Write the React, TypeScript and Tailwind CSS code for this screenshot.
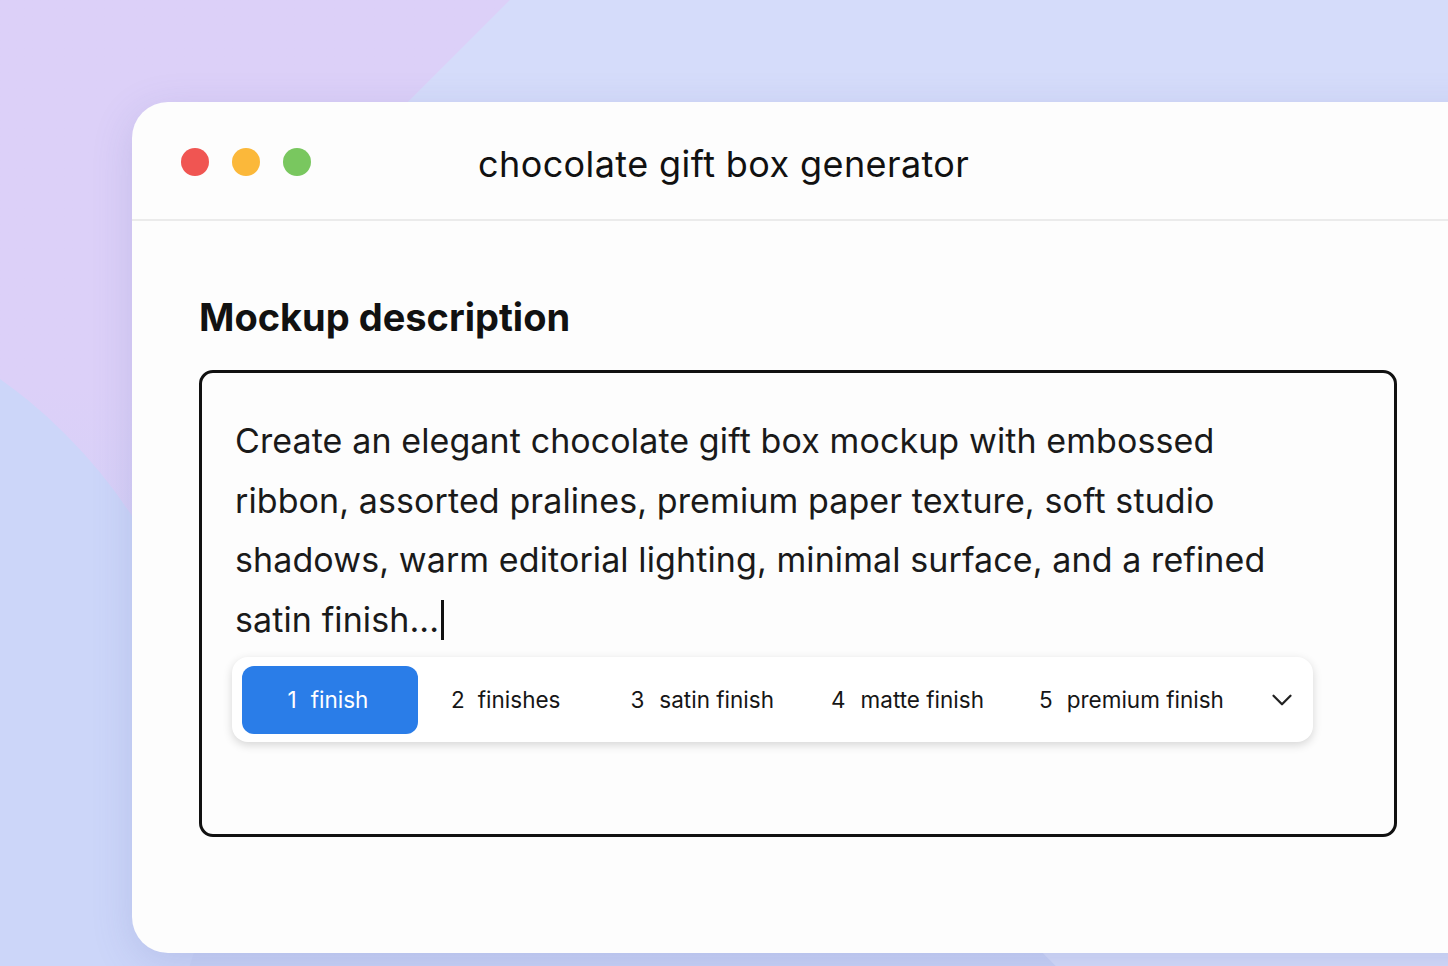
import React from "react";
import { ChevronDown } from "lucide-react";

const font = { fontFamily: "Inter, Roboto, 'Noto Sans', Arial, sans-serif" };

export default function App() {
  return (
    <div
      className="relative w-[1448px] h-[966px] overflow-hidden bg-gradient-to-b from-[#dcd0f8] from-40% to-[#c8d2f6]"
      style={font}
    >
      {/* background decorations */}
      <div className="absolute left-[714px] top-[-790px] w-[2000px] h-[2000px] rotate-45 rounded-[80px] bg-[#d5dcfa]" />
      <div className="absolute left-[-817px] top-[283px] w-[1034px] h-[1034px] rounded-full bg-[#ccd6f9]" />

      <div className="relative pl-[132px] pt-[102px]">
        <div className="w-[1400px] h-[851px] rounded-l-[36px] bg-[#fdfdfd] shadow-[0_10px_40px_rgba(90,100,170,0.18)]">
          {/* title bar */}
          <div className="h-[119px] border-b-2 border-[#ebebeb] flex items-center pl-[49px]">
            <div className="flex items-center gap-[23px] mt-[2px]">
              <div className="w-[28px] h-[28px] rounded-full bg-[#f05552]" />
              <div className="w-[28px] h-[28px] rounded-full bg-[#fbb83a]" />
              <div className="w-[28px] h-[28px] rounded-full bg-[#79c75f]" />
            </div>
            <div className="ml-[167px] text-[36px] leading-none tracking-[0.4px] text-[#111] mt-[6px]">
              chocolate gift box generator
            </div>
          </div>

          {/* content */}
          <div className="pl-[67px] pt-[72px]">
            <h1 className="text-[38px] font-bold leading-[48px] text-[#111]">
              Mockup description
            </h1>
            <div className="mt-[29px] w-[1198px] h-[467px] border-[3px] border-[#111] rounded-[14px] pl-[33px] pt-[38px]">
              <p className="text-[34px] leading-[59.5px] tracking-[0.1px] text-[#1a1a1a] whitespace-nowrap">
                Create an elegant chocolate gift box mockup with embossed
                <br />
                ribbon, assorted pralines, premium paper texture, soft studio
                <br />
                shadows, warm editorial lighting, minimal surface, and a refined
                <br />
                satin finish...
                <span className="inline-block w-[3px] h-[40px] bg-[#111] align-[-8px] ml-[2px]" />
              </p>
              <div className="-ml-[3px] mt-[8px] w-[1081px] h-[85px] rounded-[16px] bg-white shadow-[0_3px_10px_rgba(0,0,0,0.16)] flex items-center px-[10px] text-[22.5px]">
                <div className="w-[176px] h-[68px] rounded-[12px] bg-[#2a7de8] text-white flex items-center justify-center gap-[14px] pr-[4px]">
                  <span>1</span>
                  <span>finish</span>
                </div>
                <div className="flex items-center text-[#161616] ml-[33px] gap-[13px]">
                  <span>2</span>
                  <span>finishes</span>
                </div>
                <div className="flex items-center text-[#161616] ml-[70px] gap-[15px]">
                  <span>3</span>
                  <span>satin finish</span>
                </div>
                <div className="flex items-center text-[#161616] ml-[57px] gap-[15px]">
                  <span>4</span>
                  <span>matte finish</span>
                </div>
                <div className="flex items-center text-[#161616] ml-[55px] gap-[14px]">
                  <span>5</span>
                  <span>premium finish</span>
                </div>
                <ChevronDown className="ml-auto mr-[4px] w-[34px] h-[34px] text-[#222]" strokeWidth={1.6} />
              </div>
            </div>
          </div>
        </div>
      </div>
    </div>
  );
}
